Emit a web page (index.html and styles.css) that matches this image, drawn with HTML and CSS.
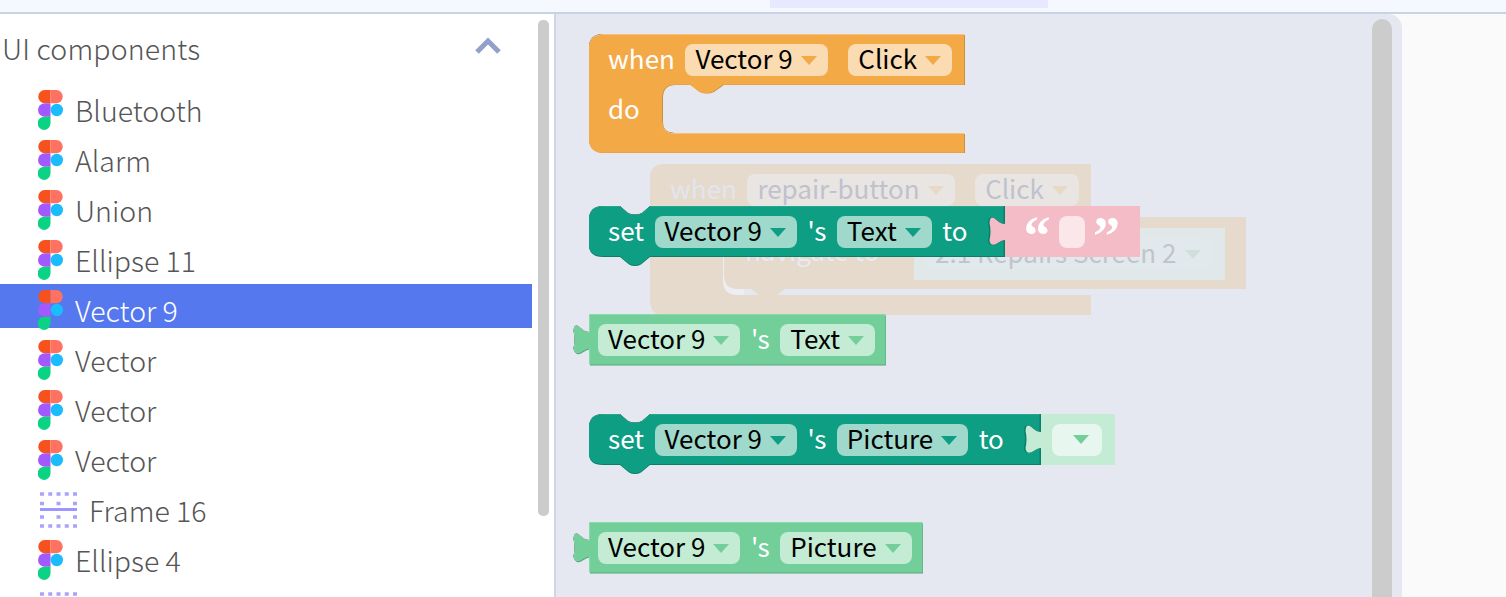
FILE: index.html
```html
<!DOCTYPE html>
<html lang="en">
<head>
<meta charset="UTF-8">
<meta name="viewport" content="width=device-width, initial-scale=1.0">
<title>Blocks</title>
<link rel="stylesheet" href="styles.css">
</head>
<body>
  <svg class="defs" width="0" height="0">
    <symbol id="figma" viewBox="0 0 25 40">
      <path fill="#f7521e" d="M12.5 0H6.67a6.67 6.67 0 0 0 0 13.33h5.83z"/>
      <path fill="#ff7262" d="M12.5 0h5.83a6.67 6.67 0 0 1 0 13.33H12.5z"/>
      <path fill="#a259ff" d="M12.5 13.33H6.67a6.67 6.67 0 0 0 0 13.34h5.83z"/>
      <circle fill="#1abcfe" cx="18.8" cy="20" r="6.2"/>
      <path fill="#0ad383" d="M6.67 26.67h5.83v6.66a6.4 6.67 0 1 1-5.83-6.66z"/>
    </symbol>
    <symbol id="frame" viewBox="0 0 37 36">
      <path class="dots" d="M0 2H37M0 34H37"/>
      <path class="dots-wide" d="M0 11.500H37M0 25H37"/>
      <rect class="frame-line" x="0" y="16" width="37" height="3"/>
    </symbol>
  </svg>

  <!-- Top bar -->
  <div class="topbar"><div class="topbar-tab"></div></div>

  <div class="main">
    <!-- Components list -->
    <div class="sidebar">
      <div class="list">
        <div class="list-title">
          <span class="list-name">UI components</span>
          <svg class="chevron" width="26" height="18" viewBox="0 0 26 18"><path d="M2 15L13 4l11 11"/></svg>
        </div>
        <div class="row"><svg class="icon"><use href="#figma"/></svg><span class="label">Bluetooth</span></div>
        <div class="row"><svg class="icon"><use href="#figma"/></svg><span class="label">Alarm</span></div>
        <div class="row"><svg class="icon"><use href="#figma"/></svg><span class="label">Union</span></div>
        <div class="row"><svg class="icon"><use href="#figma"/></svg><span class="label">Ellipse 11</span></div>
        <div class="row selected"><svg class="icon"><use href="#figma"/></svg><span class="label">Vector 9</span></div>
        <div class="row"><svg class="icon"><use href="#figma"/></svg><span class="label">Vector</span></div>
        <div class="row"><svg class="icon"><use href="#figma"/></svg><span class="label">Vector</span></div>
        <div class="row"><svg class="icon"><use href="#figma"/></svg><span class="label">Vector</span></div>
        <div class="row"><svg class="icon-frame"><use href="#frame"/></svg><span class="label">Frame 16</span></div>
        <div class="row"><svg class="icon"><use href="#figma"/></svg><span class="label">Ellipse 4</span></div>
        <div class="row"><svg class="icon-frame"><use href="#frame"/></svg></div>
      </div>
      <div class="sidebar-thumb"></div>
    </div>

    <!-- Block workspace -->
    <div class="workspace">
      <div class="workspace-thumb"></div>

      <!-- Faded block being dragged underneath -->
      <div class="block ghost">
        <svg class="shape" width="442" height="152"><path class="fill-ghost" d="M14 0H441V151H14Q0 151 0 137V14Q0 0 14 0Z"/><path class="fill-bg" d="M86 131H441V125H86Z"/></svg>
        <div class="block-row">
          <span class="text ghost-when">when</span>
          <span class="field ghost-field">repair-button<i class="caret ghost-caret"></i></span>
          <span class="field ghost-field ml-10">Click<i class="caret ghost-caret"></i></span>
        </div>
        <div class="ghost-inner">
          <svg class="shape" width="522" height="82"><path class="fill-edge" d="M-1 0H20V78H14Q-1 78 -1 64Z"/><path class="fill-ghost" d="M0 0H522V72H61L52 79Q44 83 36 79L27 72H14Q0 72 0 58Z"/></svg>
          <div class="ghost-input">
            <span class="field ghost-input-field">2.1 Repairs Screen 2<i class="caret ghost-input-caret"></i></span>
          </div>
          <span class="text ghost-nav">navigate to</span>
        </div>
      </div>

      <!-- when Vector 9 Click -->
      <div class="block when-block">
        <svg class="shape" width="377" height="122">
          <path id="s1" d="M14 0H375V50H134L124 57Q117 60 110 57L101 50H86Q73 50 73 63V86Q73 99 86 99H375V118H14Q0 118 0 104V14Q0 0 14 0Z"/>
          <use href="#s1" class="orange-dark" x="1" y="1"/><use href="#s1" class="orange-light"/><use href="#s1" class="orange" y="0.800"/>
        </svg>
        <div class="block-row">
          <span class="text">when</span>
          <span class="field orange-field">Vector 9<i class="caret orange-caret"></i></span>
          <span class="field orange-field ml-10">Click<i class="caret orange-caret"></i></span>
        </div>
        <div class="block-row do-row"><span class="text">do</span></div>
      </div>

      <!-- set Vector 9's Text to "" -->
      <div class="block set-text">
        <svg class="shape" width="416" height="60">
          <path id="s2" d="M14 0H31L39 7Q46 10 53 7L61 0H415V49.500H61L52 57Q46 60 40 57L31 49.500H14Q0 49.500 0 38V14Q0 0 14 0Z"/>
          <use href="#s2" class="teal-dark" y="1.500"/><use href="#s2" class="teal-light"/><use href="#s2" class="teal" y="0.500"/>
        </svg>
        <div class="block-row">
          <span class="text">set</span>
          <span class="field teal-field">Vector 9<i class="caret teal-caret"></i></span>
          <span class="text">'s</span>
          <span class="field teal-field">Text<i class="caret teal-caret"></i></span>
          <span class="text">to</span>
        </div>
        <div class="value pink-value">
          <svg class="shape" width="136" height="51">
            <path id="s3" d="M0 0H135V51H0V34C-3 34 -7 37 -10 38.500Q-15 40 -15.500 34Q-13.500 25 -15.500 17Q-15 10 -11 12C-7 15 -4 18 0 18Z"/>
            <use href="#s3" class="teal-dark" x="-1.500"/><use href="#s3" class="pink"/>
          </svg>
          <span class="quote">“</span><span class="pink-field"></span><span class="quote">”</span>
        </div>
      </div>

      <!-- Vector 9's Text getter -->
      <div class="block get-text">
        <svg class="shape" width="298" height="52">
          <path id="s4" d="M0 0H296V50H0V34C-3 34 -7 37 -10 38.500Q-15 40 -15.500 34Q-13.500 25 -15.500 17Q-15 10 -11 12C-7 15 -4 18 0 18Z"/>
          <use href="#s4" class="green-dark" x="1" y="1.500"/><use href="#s4" class="green-light"/><use href="#s4" class="green" x="0.500" y="0.500"/>
        </svg>
        <div class="block-row tight">
          <span class="field green-field">Vector 9<i class="caret green-caret"></i></span>
          <span class="text">'s</span>
          <span class="field green-field">Text<i class="caret green-caret"></i></span>
        </div>
      </div>

      <!-- set Vector 9's Picture to -->
      <div class="block set-picture">
        <svg class="shape" width="453" height="60">
          <path id="s5" d="M14 0H31L39 7Q46 10 53 7L61 0H452V49.500H61L52 57Q46 60 40 57L31 49.500H14Q0 49.500 0 38V14Q0 0 14 0Z"/>
          <use href="#s5" class="teal-dark" y="1.500"/><use href="#s5" class="teal-light"/><use href="#s5" class="teal" y="0.500"/>
        </svg>
        <div class="block-row">
          <span class="text">set</span>
          <span class="field teal-field">Vector 9<i class="caret teal-caret"></i></span>
          <span class="text">'s</span>
          <span class="field teal-field">Picture<i class="caret teal-caret"></i></span>
          <span class="text">to</span>
        </div>
        <div class="value green-value">
          <svg class="shape" width="74" height="51">
            <path id="s6" d="M0 0H74V51H0V34C-3 34 -7 37 -10 38.500Q-15 40 -15.500 34Q-13.500 25 -15.500 17Q-15 10 -11 12C-7 15 -4 18 0 18Z"/>
            <use href="#s6" class="teal-dark" x="-1.500"/><use href="#s6" class="pale-green"/>
          </svg>
          <span class="pale-field"><i class="caret green-caret"></i></span>
        </div>
      </div>

      <!-- Vector 9's Picture getter -->
      <div class="block get-picture">
        <svg class="shape" width="335" height="52">
          <path id="s7" d="M0 0H333V50H0V34C-3 34 -7 37 -10 38.500Q-15 40 -15.500 34Q-13.500 25 -15.500 17Q-15 10 -11 12C-7 15 -4 18 0 18Z"/>
          <use href="#s7" class="green-dark" x="1" y="1.500"/><use href="#s7" class="green-light"/><use href="#s7" class="green" x="0.500" y="0.500"/>
        </svg>
        <div class="block-row tight">
          <span class="field green-field">Vector 9<i class="caret green-caret"></i></span>
          <span class="text">'s</span>
          <span class="field green-field">Picture<i class="caret green-caret"></i></span>
        </div>
      </div>
    </div>

    <div class="right-panel"></div>
  </div>
</body>
</html>
```

FILE: styles.css
```css
html, body {
  height: 100%;
}
body {
  margin: 0;
  overflow: hidden;
  background: #fafafa;
  font-family: "Noto Sans CJK SC", "Noto Sans", sans-serif;
  display: flex;
  flex-direction: column;
}
.defs {
  position: absolute;
}

/* Top bar */
.topbar {
  flex: none;
  height: 12px;
  padding-left: 770px;
  background: #f5f8fe;
  border-bottom: 2px solid #c9d3e6;
}
.topbar-tab {
  width: 278px;
  height: 8px;
  background: #e6e9ff;
}
.main {
  flex: 1;
  display: flex;
  min-height: 0;
}

/* Sidebar */
.sidebar {
  flex: none;
  width: 554px;
  display: flex;
  background: #fff;
  border-right: 2px solid #cdd7e8;
  overflow: hidden;
}
.list {
  flex: none;
  width: 532px;
  color: #555;
  font-size: 28.500px;
  font-weight: 300;
}
.list-title {
  height: 70px;
  padding: 0 31px 0 2px;
  display: flex;
  align-items: center;
  justify-content: space-between;
}
.list-name {
  margin-bottom: 4px;
  letter-spacing: 0.150px;
}
.chevron {
  margin-bottom: 6px;
  fill: none;
  stroke: #93a0c9;
  stroke-width: 5;
}
.row {
  display: flex;
  gap: 12px;
  height: 44px;
  margin-bottom: 6px;
  padding-left: 38px;
}
.row.selected {
  background: #5578ef;
  color: #fff;
}
.icon {
  flex: none;
  width: 25px;
  height: 40px;
  margin-top: 6px;
}
.icon-frame {
  flex: none;
  width: 37px;
  height: 36px;
  margin: 8px 0 0 2px;
}
.dots {
  fill: none;
  stroke: #a9a3ff;
  stroke-width: 3.500;
  stroke-dasharray: 4 4.250;
}
.dots-wide {
  fill: none;
  stroke: #a9a3ff;
  stroke-width: 3.500;
  stroke-dasharray: 4 12.500;
}
.frame-line {
  fill: #9d96ff;
}
.label {
  line-height: 44px;
  margin-top: 4px;
  white-space: nowrap;
}
.sidebar-thumb {
  flex: none;
  width: 11px;
  height: 496px;
  margin: 6px 0 0 6px;
  background: #ccc;
  border-radius: 5px;
}

/* Workspace */
.workspace {
  flex: none;
  position: relative;
  width: 846px;
  background: #e5e8f1;
  border-top-right-radius: 14px;
  overflow: hidden;
}
.workspace-thumb {
  position: absolute;
  top: 5px;
  bottom: 0;
  right: 10px;
  width: 20px;
  background: #ccc;
  border-radius: 10px 10px 0 0;
}
.right-panel {
  flex: 1;
}

/* Blocks */
.block {
  position: absolute;
  z-index: 0;
  font-size: 26px;
}
.when-block { left: 33px; top: 20px; }
.set-text { left: 33px; top: 192px; }
.get-text { left: 33px; top: 300px; }
.set-picture { left: 33px; top: 400px; }
.get-picture { left: 33px; top: 508px; }
.ghost { left: 94px; top: 150px; }

.shape {
  position: absolute;
  left: 0;
  top: 0;
  z-index: -1;
  overflow: visible;
}
.block-row {
  display: flex;
  align-items: center;
  gap: 10.500px;
  height: 32px;
  padding: 10px 0 9px 19px;
  white-space: nowrap;
}
.block-row.tight {
  padding-left: 9px;
}
.do-row {
  padding-top: 9px;
}
.text {
  align-self: flex-start;
  color: #fff;
  line-height: 28px;
}
.field {
  display: flex;
  align-items: flex-start;
  gap: 8px;
  height: 32px;
  padding: 0 11px 0 10px;
  color: #000;
  border-radius: 8px;
  line-height: 28px;
  white-space: nowrap;
}
.ml-10 {
  margin-left: 10px;
}
.caret {
  align-self: center;
  width: 0;
  height: 0;
  border-style: solid;
  border-width: 9px 8.500px 0;
  border-color: currentColor transparent transparent;
}

.orange { fill: #f4a947; }
.orange-dark { fill: #c98f3f; }
.orange-light { fill: #f8c98a; }
.orange-field { background: #fbdcb2; }
.orange-caret { color: #f4a947; }

.teal { fill: #0e9e83; }
.teal-dark { fill: #0b7d68; }
.teal-light { fill: #3fb09b; }
.teal-field { background: #9ed9cb; }
.teal-caret { color: #0e9e83; }

.green { fill: #72cf9a; }
.green-dark { fill: #5ba57b; }
.green-light { fill: #a3e0bd; }
.green-field { background: #c4ecd5; }
.green-caret { color: #72cf9a; }

.value {
  position: absolute;
  top: 0;
  display: flex;
  align-items: center;
  height: 51px;
}
.pink-value {
  left: 416px;
  width: 135px;
  padding-left: 18.500px;
  box-sizing: border-box;
}
.pink { fill: #f4bcc7; }
.quote {
  width: 35.500px;
  height: 51px;
  color: #fff;
  font-family: "Liberation Serif", serif;
  font-size: 54px;
  font-weight: 700;
  line-height: 60px;
}
.pink-field {
  flex: none;
  width: 26px;
  height: 32px;
  margin: 0 8px 0 0;
  background: #fbe7ea;
  border-radius: 8px;
}
.green-value {
  left: 452px;
  width: 74px;
  padding-left: 11px;
  box-sizing: border-box;
}
.pale-green { fill: #c4ecd5; }
.pale-field {
  display: flex;
  align-items: center;
  justify-content: center;
  width: 50px;
  height: 32px;
  padding-left: 8px;
  box-sizing: border-box;
  background: #e7f6ee;
  border-radius: 8px;
}

/* Faded block */
.fill-ghost { fill: #e5dacb; }
.fill-bg { fill: #e5e8f1; }
.fill-edge { fill: #eceef4; }
.ghost .block-row {
  padding-left: 20px;
}
.ghost-when {
  color: #e3e5ee;
}
.ghost-field {
  background: #e9e5e2;
  color: #bfc2cd;
}
.ghost-caret {
  color: #e6dac7;
}
.ghost-inner {
  position: absolute;
  left: 74px;
  top: 53px;
  width: 522px;
  height: 72px;
}
.ghost-input {
  position: absolute;
  left: 190px;
  top: 11px;
  width: 311px;
  height: 52px;
  box-sizing: border-box;
  padding: 10px 13px 10px 11px;
  background: #e0e8ea;
}
.ghost-input-field {
  justify-content: space-between;
  background: #e2e9ec;
  color: #c0c5cc;
}
.ghost-input-caret {
  color: #cfe0dc;
}
.ghost-nav {
  position: absolute;
  left: 21px;
  top: 19px;
  color: #e9ebf2;
}
```
